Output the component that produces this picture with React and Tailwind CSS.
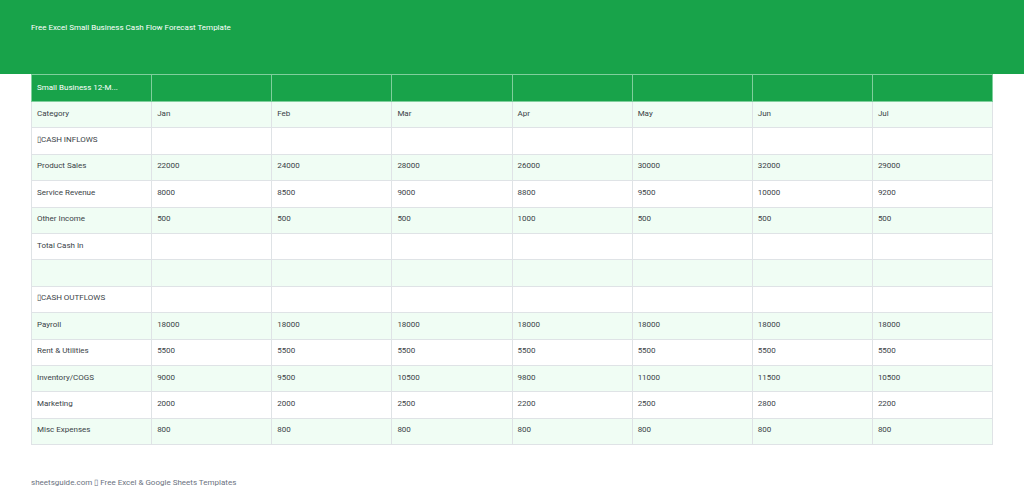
import React from "react";

const months = ["Jan", "Feb", "Mar", "Apr", "May", "Jun", "Jul"];
const BOX = "\u25AF";
const rows = [
  ["Category", ...months],
  [BOX + "CASH INFLOWS", "", "", "", "", "", "", ""],
  ["Product Sales", "22000", "24000", "28000", "26000", "30000", "32000", "29000"],
  ["Service Revenue", "8000", "8500", "9000", "8800", "9500", "10000", "9200"],
  ["Other Income", "500", "500", "500", "1000", "500", "500", "500"],
  ["Total Cash In", "", "", "", "", "", "", ""],
  ["", "", "", "", "", "", "", ""],
  [BOX + "CASH OUTFLOWS", "", "", "", "", "", "", ""],
  ["Payroll", "18000", "18000", "18000", "18000", "18000", "18000", "18000"],
  ["Rent & Utilities", "5500", "5500", "5500", "5500", "5500", "5500", "5500"],
  ["Inventory/COGS", "9000", "9500", "10500", "9800", "11000", "11500", "10500"],
  ["Marketing", "2000", "2000", "2500", "2200", "2500", "2800", "2200"],
  ["Misc Expenses", "800", "800", "800", "800", "800", "800", "800"],
];

export default function App() {
  return (
    <div
      className="w-[1024px] h-[493px] bg-white relative overflow-hidden"
      style={{ fontFamily: "Roboto, 'Liberation Sans', sans-serif" }}
    >
      <div className="h-[74px] bg-[#18a34a] px-[31px] pt-[22px]">
        <div className="text-[8px] leading-[12px] text-white">
          Free Excel Small Business Cash Flow Forecast Template
        </div>
      </div>
      <div className="mx-[31px]">
        <table className="w-[962px] table-fixed border-collapse text-[8px] leading-[10px] text-[#3a3f47]">
          <tbody>
            <tr className="h-[27px] bg-[#18a34a] text-white">
              <td className="border border-[#7fcf9c] px-[5px] pb-[1px]">Small Business 12-M...</td>
              {months.map((m) => (
                <td key={m} className="border border-[#7fcf9c] px-[5px]"></td>
              ))}
            </tr>
            {rows.map((r, i) => (
              <tr
                key={i}
                className={
                  "h-[26.4px] " + (i % 2 === 0 ? "bg-[#f0fdf4]" : "bg-white")
                }
              >
                {r.map((c, j) => (
                  <td
                    key={j}
                    className="border border-[#dfe3e6] px-[5px] pb-[2px] whitespace-nowrap overflow-hidden"
                  >
                    {c}
                  </td>
                ))}
              </tr>
            ))}
          </tbody>
        </table>
      </div>
      <div className="absolute left-[31px] top-[478px] text-[8px] leading-[10px] text-[#6b7280]">
        sheetsguide.com {BOX} Free Excel &amp; Google Sheets Templates
      </div>
    </div>
  );
}
